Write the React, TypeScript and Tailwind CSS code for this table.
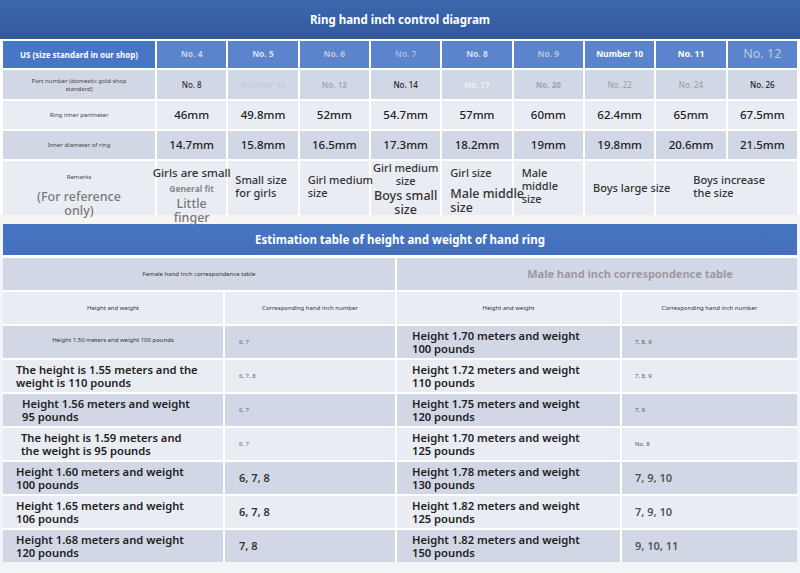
import React from "react";

const F = { fontFamily: '"Noto Sans", "Open Sans", sans-serif' };

const heads = [
  { t: "No. 4", c: "text-[8.5px] font-bold text-[#c9d1e2]" },
  { t: "No. 5", c: "text-[8.5px] font-bold text-[#d9e1f1]" },
  { t: "No. 6", c: "text-[8.5px] font-bold text-[#bcc6da]" },
  { t: "No. 7", c: "text-[8.5px] font-semibold text-[#a9badb]" },
  { t: "No. 8", c: "text-[8.5px] font-bold text-[#d6def0]" },
  { t: "No. 9", c: "text-[8.5px] font-bold text-[#b8c3d8]" },
  { t: "Number 10", c: "text-[8.5px] font-bold text-white" },
  { t: "No. 11", c: "text-[8.5px] font-bold text-white" },
  { t: "No. 12", c: "text-[12.5px] text-[#bfcbe0]" },
];

const ports = [
  { t: "No. 8", c: "text-[#333] font-medium" },
  { t: "Number 10", c: "text-[#c9cdd9] font-bold" },
  { t: "No. 12", c: "text-[#a7abb8] font-bold" },
  { t: "No. 14", c: "text-[#222] font-medium" },
  { t: "No. 17", c: "text-[#eef0f7] font-bold" },
  { t: "No. 20", c: "text-[#9fa3b0] font-bold" },
  { t: "No. 22", c: "text-[#9a9a9a]" },
  { t: "No. 24", c: "text-[#9a9a9a]" },
  { t: "No. 26", c: "text-[#222] font-medium" },
];

const perim = ["46mm", "49.8mm", "52mm", "54.7mm", "57mm", "60mm", "62.4mm", "65mm", "67.5mm"];
const diam = ["14.7mm", "15.8mm", "16.5mm", "17.3mm", "18.2mm", "19mm", "19.8mm", "20.6mm", "21.5mm"];

const dark = "bg-[#d2d7e6]";
const light = "bg-[#eaecf3]";

const female = [
  { l: ["Height 1.50 meters and weight 100 pounds"], tiny: true, pl: "", v: "6, 7", big: false },
  { l: ["The height is 1.55 meters and the", "weight is 110 pounds"], pl: "pl-[13px]", v: "6, 7, 8", big: false },
  { l: ["Height 1.56 meters and weight", "95 pounds"], pl: "pl-[19px]", v: "6, 7", big: false },
  { l: ["The height is 1.59 meters and", "the weight is 95 pounds"], pl: "pl-[18px]", v: "6, 7", big: false },
  { l: ["Height 1.60 meters and weight", "100 pounds"], pl: "pl-[13px]", v: "6, 7, 8", big: true },
  { l: ["Height 1.65 meters and weight", "106 pounds"], pl: "pl-[13px]", v: "6, 7, 8", big: true },
  { l: ["Height 1.68 meters and weight", "120 pounds"], pl: "pl-[13px]", v: "7, 8", big: true },
];

const male = [
  { l: ["Height 1.70 meters and weight", "100 pounds"], v: "7, 8, 9", big: false },
  { l: ["Height 1.72 meters and weight", "110 pounds"], v: "7, 8, 9", big: false },
  { l: ["Height 1.75 meters and weight", "120 pounds"], v: "7, 9", big: false },
  { l: ["Height 1.70 meters and weight", "125 pounds"], v: "No. 8", big: false },
  { l: ["Height 1.78 meters and weight", "130 pounds"], v: "7, 9, 10", big: true },
  { l: ["Height 1.82 meters and weight", "125 pounds"], v: "7, 9, 10", big: true },
  { l: ["Height 1.82 meters and weight", "150 pounds"], v: "9, 10, 11", big: true },
];

export default function App() {
  return (
    <div style={F} className="w-[800px] h-[573px] overflow-hidden bg-[#f3f4f8]">
      <div className="h-[41px] flex items-center justify-center bg-gradient-to-b from-[#3d67ad] to-[#33599c] border-b-[2px] border-white">
        <span className="text-[11.5px] font-bold text-white">Ring hand inch control diagram</span>
      </div>

      <div className="px-[3px] bg-white">
        <div className="grid grid-cols-[152px_repeat(9,minmax(0,1fr))] grid-rows-[27px_29px_28px_28px_54px] gap-[2px]">
          <div className="bg-[#4676c6] flex items-center justify-center text-[8px] font-bold text-white">US (size standard in our shop)</div>
          {heads.map((h) => (
            <div key={h.t} className={`bg-[#5b84cc] flex items-center justify-center ${h.c}`}>{h.t}</div>
          ))}

          <div className={`${dark} flex items-center justify-center px-5 text-center text-[6px] leading-[8px] text-[#444]`}>Port number (domestic gold shop standard)</div>
          {ports.map((p) => (
            <div key={p.t} className={`${dark} flex items-center justify-center text-[8px] ${p.c}`}>{p.t}</div>
          ))}

          <div className={`${light} flex items-center justify-center text-[6px] text-[#444]`}>Ring inner perimeter</div>
          {perim.map((v) => (
            <div key={v} className={`${light} flex items-center justify-center text-[11.5px] font-medium text-[#222]`}>{v}</div>
          ))}

          <div className={`${dark} flex items-center justify-center text-[6px] text-[#444]`}>Inner diameter of ring</div>
          {diam.map((v) => (
            <div key={v} className={`${dark} flex items-center justify-center text-[11.5px] font-medium text-[#222]`}>{v}</div>
          ))}

          <div className={`${light} flex flex-col items-center pt-[12px] text-center`}>
            <span className="text-[6px] text-[#444]">Remarks</span>
            <span className="mt-[8px] text-[12.5px] leading-[14px] font-medium text-[#7a7a7a]">(For reference<br />only)</span>
          </div>
          <div className={`${light} relative z-10 flex flex-col items-center pt-[5px] text-center whitespace-nowrap`}>
            <span className="text-[11.5px] leading-[14px] font-medium text-[#333]">Girls are small</span>
            <span className="mt-[4px] text-[8.5px] leading-[10px] font-bold text-[#888]">General fit</span>
            <span className="mt-[3px] text-[12.5px] leading-[14px] font-medium text-[#777]">Little<br />finger</span>
          </div>
          <div className={`${light} flex flex-col pl-[7px] pt-[12px] text-[11px] leading-[13px] font-medium text-[#333] whitespace-nowrap`}>
            <span>Small size<br />for girls</span>
          </div>
          <div className={`${light} relative z-10 flex flex-col pl-[8px] pt-[12px] text-[11px] leading-[13px] font-medium text-[#333] whitespace-nowrap`}>
            <span>Girl medium<br />size</span>
          </div>
          <div className={`${light} flex flex-col items-center text-center whitespace-nowrap`}>
            <span className="text-[11px] leading-[13px] font-medium text-[#333]">Girl medium<br />size</span>
            <span className="mt-[2px] text-[12.5px] leading-[14px] font-medium text-[#333]">Boys small<br />size</span>
          </div>
          <div className={`${light} relative z-10 flex flex-col pl-[8px] pt-[5px] whitespace-nowrap`}>
            <span className="text-[11px] leading-[13px] font-medium text-[#333]">Girl size</span>
            <span className="mt-[8px] text-[12.5px] leading-[14px] font-medium text-[#333]">Male middle<br />size</span>
          </div>
          <div className={`${light} flex flex-col pl-[8px] pt-[5px] text-[11px] leading-[13px] font-medium text-[#333]`}>
            <span>Male<br />middle<br />size</span>
          </div>
          <div className={`${light} relative z-10 flex items-center pl-[8px] whitespace-nowrap text-[11px] font-medium text-[#333]`}>Boys large size</div>
          <div className={`${light} col-span-2 flex flex-col pl-[37px] pt-[12px] text-[11px] leading-[13px] font-medium text-[#333]`}>
            <span>Boys increase<br />the size</span>
          </div>
        </div>
      </div>

      <div className="h-[9px] bg-[#f7f4f4]" />

      <div className="px-[3px]">
        <div className="h-[33px] flex items-center justify-center bg-gradient-to-b from-[#4675c2] to-[#4470bd] border-b-[2px] border-white">
          <span className="text-[11.5px] font-bold text-white">Estimation table of height and weight of hand ring</span>
        </div>
        <div className="grid grid-cols-[220px_170px_223px_minmax(0,1fr)] auto-rows-[32px] gap-[2px] bg-white pt-[1px]">
          <div className={`${dark} col-span-2 flex items-center justify-center text-[6px] text-[#333]`}>Female hand inch correspondence table</div>
          <div className={`${dark} col-span-2 flex items-center justify-center pl-[66px] text-[11px] font-bold text-[#9a9aa2]`}>Male hand inch correspondence table</div>

          <div className={`${light} flex items-center justify-center text-[6px] text-[#333]`}>Height and weight</div>
          <div className={`${light} flex items-center justify-center text-[6px] text-[#333]`}>Corresponding hand inch number</div>
          <div className={`${light} flex items-center justify-center text-[6px] text-[#333]`}>Height and weight</div>
          <div className={`${light} flex items-center justify-center text-[6px] text-[#333]`}>Corresponding hand inch number</div>

          {female.map((f, i) => {
            const m = male[i];
            const bg = i % 2 === 0 ? dark : light;
            return (
              <React.Fragment key={i}>
                {f.tiny ? (
                  <div className={`${bg} flex items-center justify-center pb-[4px] text-[6px] text-[#333]`}>{f.l[0]}</div>
                ) : (
                  <div className={`${bg} flex flex-col justify-center ${f.pl} text-[11.2px] leading-[13px] font-semibold text-[#222] whitespace-nowrap`}>
                    {f.l.map((s) => <span key={s}>{s}</span>)}
                  </div>
                )}
                <div className={`${bg} flex items-center pl-[14px] ${f.big ? "text-[11px] font-semibold text-[#333]" : "text-[6px] text-[#666]"}`}>{f.v}</div>
                <div className={`${bg} flex flex-col justify-center pl-[15px] text-[11.2px] leading-[13px] font-semibold text-[#222]`}>
                  {m.l.map((s) => <span key={s}>{s}</span>)}
                </div>
                <div className={`${bg} flex items-center pl-[13px] ${m.big ? "text-[11px] font-semibold text-[#555]" : "text-[6px] text-[#555]"}`}>{m.v}</div>
              </React.Fragment>
            );
          })}
        </div>
      </div>
    </div>
  );
}
